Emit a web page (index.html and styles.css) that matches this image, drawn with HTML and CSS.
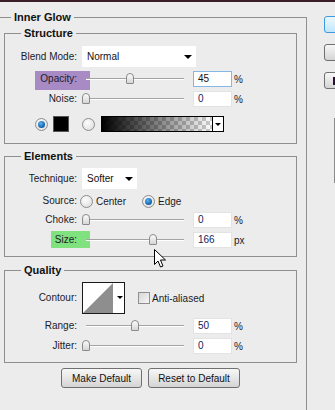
FILE: index.html
```html
<!DOCTYPE html>
<html lang="en">
<head>
    <meta charset="UTF-8">
    <title>Layer Style - Inner Glow</title>
    <link rel="stylesheet" href="styles.css">
</head>
<body>

    <div class="titlebar"></div>

    <div class="dialog">
        <fieldset class="group outer">
            <legend>Inner Glow</legend>

            <fieldset class="group structure">
                <legend>Structure</legend>
                <div class="row blend-row">
                    <label class="lbl">Blend Mode:</label>
                    <div class="select blend-select"><span>Normal</span><i class="caret"></i></div>
                </div>
                <div class="row">
                    <label class="lbl"><span class="hl hl-purple">Opacity:</span></label>
                    <div class="slider"><span class="thumb" style="left: 45%"></span></div>
                    <div class="num focus">45</div>
                    <span class="unit">%</span>
                </div>
                <div class="row">
                    <label class="lbl">Noise:</label>
                    <div class="slider"><span class="thumb" style="left: 0%"></span></div>
                    <div class="num">0</div>
                    <span class="unit">%</span>
                </div>
                <div class="row swatch-row">
                    <span class="radio checked first"></span>
                    <span class="color-swatch"></span>
                    <span class="radio second"></span>
                    <div class="gradient">
                        <div class="gradient-fill"></div>
                        <div class="gradient-btn"><i class="caret small"></i></div>
                    </div>
                </div>
            </fieldset>

            <fieldset class="group elements">
                <legend>Elements</legend>
                <div class="row technique-row">
                    <label class="lbl">Technique:</label>
                    <div class="select technique-select"><span>Softer</span><i class="caret"></i></div>
                </div>
                <div class="row source-row">
                    <label class="lbl">Source:</label>
                    <span class="radio option"></span>
                    <span class="option-text">Center</span>
                    <span class="radio checked option gap"></span>
                    <span class="option-text">Edge</span>
                </div>
                <div class="row">
                    <label class="lbl">Choke:</label>
                    <div class="slider"><span class="thumb" style="left: 0%"></span></div>
                    <div class="num">0</div>
                    <span class="unit">%</span>
                </div>
                <div class="row">
                    <label class="lbl"><span class="hl hl-green">Size:</span></label>
                    <div class="slider"><span class="thumb" style="left: 68%"></span></div>
                    <div class="num">166</div>
                    <span class="unit">px</span>
                </div>
            </fieldset>

            <fieldset class="group quality">
                <legend>Quality</legend>
                <div class="row contour-row">
                    <label class="lbl">Contour:</label>
                    <div class="contour">
                        <svg width="41" height="30" viewBox="0 0 41 30">
                            <polygon points="0,30 30,0 30,30" fill="#8e8e8e"/>
                            <polygon points="34,13 40,13 37,16" fill="#000"/>
                        </svg>
                    </div>
                    <span class="checkbox"></span>
                    <span class="check-text">Anti-aliased</span>
                </div>
                <div class="row">
                    <label class="lbl">Range:</label>
                    <div class="slider"><span class="thumb" style="left: 50%"></span></div>
                    <div class="num">50</div>
                    <span class="unit">%</span>
                </div>
                <div class="row">
                    <label class="lbl">Jitter:</label>
                    <div class="slider"><span class="thumb" style="left: 0%"></span></div>
                    <div class="num">0</div>
                    <span class="unit">%</span>
                </div>
            </fieldset>

            <div class="actions">
                <button class="btn make-default">Make Default</button>
                <button class="btn reset-default">Reset to Default</button>
            </div>
        </fieldset>

        <div class="side">
            <button class="side-btn primary" aria-label="OK"></button>
            <button class="side-btn" aria-label="Cancel"></button>
            <button class="side-btn new-style" aria-label="New Style..."><i class="glyph-n"></i></button>
            <div class="preview"></div>
        </div>
    </div>

    <svg class="cursor" width="13" height="19" viewBox="0 0 13 19">
        <path d="M0.5 0.5 L0.5 15.5 L4 12 L6.5 18 L9 17 L6.5 11 L11.5 11 Z" fill="#fff" stroke="#000" stroke-width="1"/>
    </svg>

</body>
</html>
```

FILE: styles.css
```css
body {
    margin: 0;
    background-color: #ececec;
    font-family: 'Liberation Sans', Arial, sans-serif;
    font-size: 10px;
    color: #1b1b28;
    overflow: hidden;
    position: relative;
}

.titlebar {
    height: 2px;
    background-color: #3b1d26;
}

.dialog {
    display: flex;
    align-items: flex-start;
}

/* group boxes */

.group {
    border: 1px solid #8f8f8f;
    margin: 0;
    padding: 0;
    min-width: 0;
}

.group legend {
    font-size: 11px;
    font-weight: bold;
    line-height: 14px;
    color: #111;
    padding: 0 3px;
    margin-left: 16px;
}

.outer {
    flex: none;
    width: 308px;
    box-sizing: border-box;
    margin: 8px 0 0 -1px;
    padding: 2px 9px 22px 4px;
}

.outer > legend {
    margin-left: 7px;
}

.structure {
    padding-bottom: 11px;
}

.elements {
    margin-top: 5px;
    padding-bottom: 8px;
}

.quality {
    margin-top: 6px;
    padding-bottom: 8px;
}

/* rows */

.row {
    display: flex;
    align-items: center;
    height: 16px;
    margin-top: 4px;
}

.lbl {
    width: 72px;
    flex: none;
    text-align: right;
    line-height: 14px;
}

.hl {
    display: inline-block;
    line-height: 14px;
}

.hl-purple {
    background-color: #a88bc5;
    padding: 1px 13px 4px 5px;
    margin: -1px -13px -4px 0;
}

.hl-green {
    background-color: #7fe27f;
    padding: 2px 13px 1px 4px;
    margin: -2px -13px -1px 0;
}

.blend-row {
    margin-top: 6px;
    height: 21px;
}

.technique-row {
    margin-top: 5px;
    height: 21px;
}

.source-row {
    margin-top: 5px;
    height: 14px;
}

.swatch-row {
    margin-top: 9px;
}

.contour-row {
    margin-top: 5px;
    height: 32px;
}

/* controls */

.select {
    display: flex;
    align-items: center;
    justify-content: space-between;
    box-sizing: border-box;
    height: 21px;
    margin-left: 5px;
    padding: 0 4px 0 5px;
    background-color: #fff;
    color: #111;
}

.blend-select {
    width: 114px;
}

.technique-select {
    width: 55px;
}

.caret {
    width: 0;
    height: 0;
    border-left: 4px solid transparent;
    border-right: 4px solid transparent;
    border-top: 4px solid #000;
}

.caret.small {
    border-left-width: 3px;
    border-right-width: 3px;
    border-top-width: 3px;
}

.slider {
    position: relative;
    width: 98px;
    height: 16px;
    margin-left: 9px;
    flex: none;
}

.slider::before {
    content: "";
    position: absolute;
    left: 0;
    right: 0;
    top: 7px;
    height: 1px;
    background-color: #a3a3a3;
    box-shadow: 0 1px 0 #fff;
}

.thumb {
    position: absolute;
    top: 2px;
    width: 8px;
    height: 11px;
    margin-left: -4px;
    box-sizing: border-box;
    border: 1px solid #8a8a8a;
    border-radius: 4px 4px 1px 1px;
    background: linear-gradient(#fbfbfb, #d6d6d6);
}

.num {
    width: 39px;
    height: 16px;
    box-sizing: border-box;
    margin-left: 9px;
    padding-left: 4px;
    line-height: 14px;
    background-color: #fff;
    border: 1px solid #e3e3e3;
    color: #14245a;
    flex: none;
}

.num.focus {
    border-color: #84b6e6;
    color: #111;
}

.unit {
    margin-left: 2px;
}

.radio {
    position: relative;
    width: 13px;
    height: 13px;
    box-sizing: border-box;
    border: 1px solid #8d8d8d;
    border-radius: 50%;
    background: radial-gradient(circle at 40% 35%, #fdfdfd, #d9d9d9);
    flex: none;
}

.radio.checked::after {
    content: "";
    position: absolute;
    left: 2px;
    top: 2px;
    width: 7px;
    height: 7px;
    border-radius: 50%;
    background: radial-gradient(circle at 40% 35%, #5cb2f0, #0e5ea8 70%);
}

.radio.first {
    margin-left: 30px;
}

.radio.second {
    margin-left: 13px;
}

.color-swatch {
    width: 16px;
    height: 16px;
    box-sizing: border-box;
    margin-left: 5px;
    background-color: #000;
    border: 1px solid #555;
}

.gradient {
    display: flex;
    width: 123px;
    height: 16px;
    box-sizing: border-box;
    margin-left: 6px;
    border: 1px solid #000;
    background-color: #fff;
}

.gradient-fill {
    flex: 1;
    background-image:
        linear-gradient(to right, #000, rgba(0, 0, 0, 0)),
        linear-gradient(45deg, #cbcbcb 25%, transparent 25%, transparent 75%, #cbcbcb 75%),
        linear-gradient(45deg, #cbcbcb 25%, transparent 25%, transparent 75%, #cbcbcb 75%);
    background-size: 100% 100%, 8px 8px, 8px 8px;
    background-position: 0 0, 0 0, 4px 4px;
}

.gradient-btn {
    width: 10px;
    display: flex;
    align-items: center;
    justify-content: center;
    border-left: 1px solid #000;
}

.radio.option {
    margin-left: 3px;
}

.radio.option.gap {
    margin-left: 16px;
}

.option-text {
    margin-left: 3px;
}

.contour {
    width: 43px;
    height: 32px;
    box-sizing: border-box;
    margin-left: 5px;
    border: 1px solid #1a1a1a;
    background-color: #fff;
    flex: none;
}

.contour svg {
    display: block;
}

.checkbox {
    width: 12px;
    height: 12px;
    box-sizing: border-box;
    margin-left: 13px;
    border: 1px solid #8f8f8f;
    background: linear-gradient(135deg, #d6d6d6, #f6f6f6);
    flex: none;
}

.check-text {
    margin-left: 2px;
}

/* buttons */

.actions {
    display: flex;
    justify-content: center;
    gap: 6px;
    margin-top: 5px;
}

.btn,
.side-btn {
    height: 20px;
    box-sizing: border-box;
    padding: 0;
    font-family: 'Liberation Sans', Arial, sans-serif;
    font-size: 10px;
    color: #111;
    border: 1px solid #707070;
    border-radius: 3px;
    background: linear-gradient(#f7f7f7, #e6e6e6 50%, #d4d4d4);
}

.make-default {
    width: 81px;
}

.reset-default {
    width: 92px;
}

.side {
    flex: none;
    display: flex;
    flex-direction: column;
    margin-left: 17px;
    padding-top: 14px;
}

.side-btn {
    width: 80px;
    height: 17px;
    margin-bottom: 11px;
}

.side-btn.primary {
    border-color: #3c9ae0;
    background: linear-gradient(#eaf6fd, #d9f0fc 50%, #bee6fd);
}

.side-btn.new-style {
    display: flex;
    align-items: center;
    padding-left: 8px;
}

.glyph-n {
    width: 2px;
    height: 8px;
    background-color: #2a1030;
}

.preview {
    height: 65px;
    margin: 18px 0 0 10px;
    border-left: 1px solid #8a8a8a;
}

.cursor {
    position: absolute;
    left: 154px;
    top: 249px;
}
```
